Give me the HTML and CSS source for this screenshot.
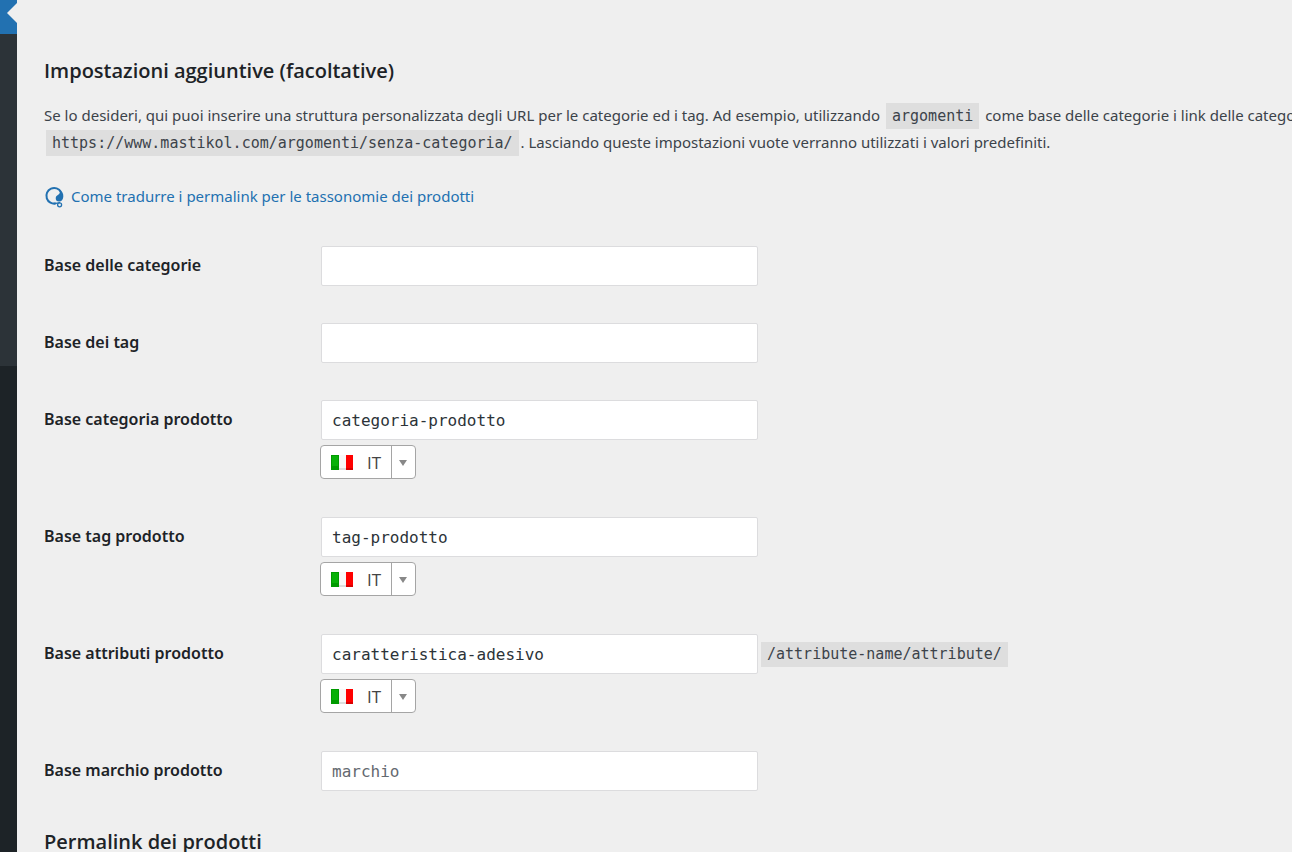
FILE: index.html
```html
<!DOCTYPE html>
<html lang="it">
<head>
    <meta charset="UTF-8">
    <meta name="viewport" content="width=device-width, initial-scale=1.0">
    <title>Impostazioni permalink</title>
    <link rel="stylesheet" href="styles.css">
</head>
<body>
    <!-- Menu laterale -->
    <nav class="sidebar" aria-label="Menu">
        <div class="menu-current"></div>
        <div class="submenu"></div>
    </nav>

    <main class="content">
        <h2>Impostazioni aggiuntive (facoltative)</h2>
        <p class="intro">Se lo desideri, qui puoi inserire una struttura personalizzata degli URL per le categorie ed i tag. Ad esempio, utilizzando <code>argomenti</code> come base delle categorie i link delle categorie<br><code>https://www.mastikol.com/argomenti/senza-categoria/</code>. Lasciando queste impostazioni vuote verranno utilizzati i valori predefiniti.</p>

        <a class="help-link" href="#">
            <svg class="help-icon" width="20" height="22" viewBox="0 0 20 22" aria-hidden="true">
                <path d="M12 17.4A7.8 7.8 0 1 1 17 6" fill="none" stroke="#2271b1" stroke-width="2"/>
                <path d="M15.2 3.6C18.2 5.2 19.6 7.8 19.3 10.8C19 13.6 17.6 15.6 15.2 15.6C12.6 15.6 11.3 13.6 11.8 11.4C12.4 9.4 15.4 9 15.8 6.6Z" fill="#2271b1"/>
                <path d="M10 17.5C12.6 17.8 13.4 16.6 16 16.6" fill="none" stroke="#2271b1" stroke-width="1.4"/>
                <circle cx="15.6" cy="18.8" r="2" fill="none" stroke="#2271b1" stroke-width="1.3"/>
            </svg>
            <span>Come tradurre i permalink per le tassonomie dei prodotti</span>
        </a>

        <form class="form-table">
            <div class="row">
                <label for="category_base">Base delle categorie</label>
                <div class="field">
                    <input type="text" id="category_base">
                </div>
            </div>
            <div class="row">
                <label for="tag_base">Base dei tag</label>
                <div class="field">
                    <input type="text" id="tag_base">
                </div>
            </div>
            <div class="row">
                <label for="product_category">Base categoria prodotto</label>
                <div class="field">
                    <input type="text" id="product_category" value="categoria-prodotto">
                    <div class="lang">
                        <svg class="flag" width="22" height="15" viewBox="0 0 22 15" aria-hidden="true">
                            <rect width="8" height="15" fill="#009a00"/>
                            <rect x="1" y="1" width="6" height="10" fill="#08b108"/>
                            <rect x="8" width="7" height="15" fill="#f8f8f8"/>
                            <rect x="8" y="13" width="7" height="2" fill="#ddd"/>
                            <rect x="15" width="7" height="15" fill="#f00"/>
                            <rect x="15" y="13" width="7" height="2" fill="#d90000"/>
                        </svg>
                        <select aria-label="Lingua della base categoria"><option>IT</option></select>
                        <span class="arrow"></span>
                    </div>
                </div>
            </div>
            <div class="row">
                <label for="product_tag">Base tag prodotto</label>
                <div class="field">
                    <input type="text" id="product_tag" value="tag-prodotto">
                    <div class="lang">
                        <svg class="flag" width="22" height="15" viewBox="0 0 22 15" aria-hidden="true">
                            <rect width="8" height="15" fill="#009a00"/>
                            <rect x="1" y="1" width="6" height="10" fill="#08b108"/>
                            <rect x="8" width="7" height="15" fill="#f8f8f8"/>
                            <rect x="8" y="13" width="7" height="2" fill="#ddd"/>
                            <rect x="15" width="7" height="15" fill="#f00"/>
                            <rect x="15" y="13" width="7" height="2" fill="#d90000"/>
                        </svg>
                        <select aria-label="Lingua della base tag"><option>IT</option></select>
                        <span class="arrow"></span>
                    </div>
                </div>
            </div>
            <div class="row">
                <label for="product_attribute">Base attributi prodotto</label>
                <div class="field">
                    <div class="input-line">
                        <input type="text" id="product_attribute" value="caratteristica-adesivo">
                        <code>/attribute-name/attribute/</code>
                    </div>
                    <div class="lang">
                        <svg class="flag" width="22" height="15" viewBox="0 0 22 15" aria-hidden="true">
                            <rect width="8" height="15" fill="#009a00"/>
                            <rect x="1" y="1" width="6" height="10" fill="#08b108"/>
                            <rect x="8" width="7" height="15" fill="#f8f8f8"/>
                            <rect x="8" y="13" width="7" height="2" fill="#ddd"/>
                            <rect x="15" width="7" height="15" fill="#f00"/>
                            <rect x="15" y="13" width="7" height="2" fill="#d90000"/>
                        </svg>
                        <select aria-label="Lingua della base attributi"><option>IT</option></select>
                        <span class="arrow"></span>
                    </div>
                </div>
            </div>
            <div class="row">
                <label for="product_brand">Base marchio prodotto</label>
                <div class="field">
                    <input type="text" id="product_brand" placeholder="marchio">
                </div>
            </div>
        </form>

        <h2>Permalink dei prodotti</h2>
    </main>
</body>
</html>
```

FILE: styles.css
```css
* {
    box-sizing: border-box;
}
body {
    margin: 0;
    display: flex;
    height: 100vh;
    overflow: hidden;
    background: #efefef;
    color: #3c434a;
    font-family: "Segoe UI", "Noto Sans", sans-serif;
    font-size: 15px;
    line-height: 27px;
}

/* Menu laterale */
.sidebar {
    flex: none;
    width: 17px;
    background: #1d2327;
}
.menu-current {
    position: relative;
    height: 34px;
    background: #2271b1;
}
.menu-current::after {
    content: "";
    position: absolute;
    right: 0;
    top: 3px;
    border: 10px solid transparent;
    border-left: 0;
    border-right-color: #efefef;
}
.submenu {
    height: 332px;
    background: #2c3338;
}

.content {
    flex: 1;
    min-width: 0;
    padding: 57px 0 0 27px;
    overflow: hidden;
}
h2 {
    margin: 0;
    color: #1d2327;
    font-family: "Segoe UI", "Open Sans", sans-serif;
    font-size: 20px;
    font-weight: 600;
    line-height: 28px;
}
.intro {
    margin: 17px 0 27px;
    white-space: nowrap;
}
code {
    margin: 0 2px;
    padding: 4px 6px;
    background: #dedede;
    font-family: Consolas, "DejaVu Sans Mono", monospace;
    font-size: 15px;
    line-height: 18px;
}
.help-link {
    display: flex;
    align-items: center;
    gap: 7px;
    color: #2271b1;
    text-decoration: none;
}

/* Campi del modulo */
.form-table {
    margin: 18px 0;
}
.row {
    display: flex;
    padding: 18px 0 19px;
}
.row label {
    width: 276px;
    padding-top: 6px;
    color: #1d2327;
    font-size: 16px;
    font-weight: 600;
}
.row input {
    display: block;
    width: 437px;
    height: 40px;
    margin: 0 1px;
    padding: 0 10px;
    border: 1px solid #dcdcde;
    border-radius: 2px;
    background: #fff;
    color: #2c3338;
    font-family: Consolas, "DejaVu Sans Mono", monospace;
    font-size: 16px;
}
.row input::placeholder {
    color: #646970;
}
.input-line {
    display: flex;
    align-items: center;
}
.input-line code {
    padding: 0 6px;
    line-height: 25px;
}

/* Selettore della lingua */
.lang {
    display: flex;
    align-items: center;
    width: 96px;
    height: 34px;
    margin: 5px 0 1px;
    padding-left: 10px;
    border: 1px solid #a5a5a5;
    border-radius: 4px;
    background: #fff;
}
.flag {
    flex: none;
}
.lang select {
    flex: 1;
    height: 32px;
    padding: 0 0 0 14px;
    border: 0;
    background: none;
    color: #444;
    appearance: none;
    font-family: "Segoe UI", "Open Sans", sans-serif;
    font-size: 17px;
}
.arrow {
    display: flex;
    align-items: center;
    justify-content: center;
    width: 24px;
    height: 32px;
    padding: 2px 2px 0 0;
    border-left: 1px solid #a5a5a5;
}
.arrow::after {
    content: "";
    border: 4px solid transparent;
    border-top: 6px solid #888;
    border-bottom: 0;
}
```
